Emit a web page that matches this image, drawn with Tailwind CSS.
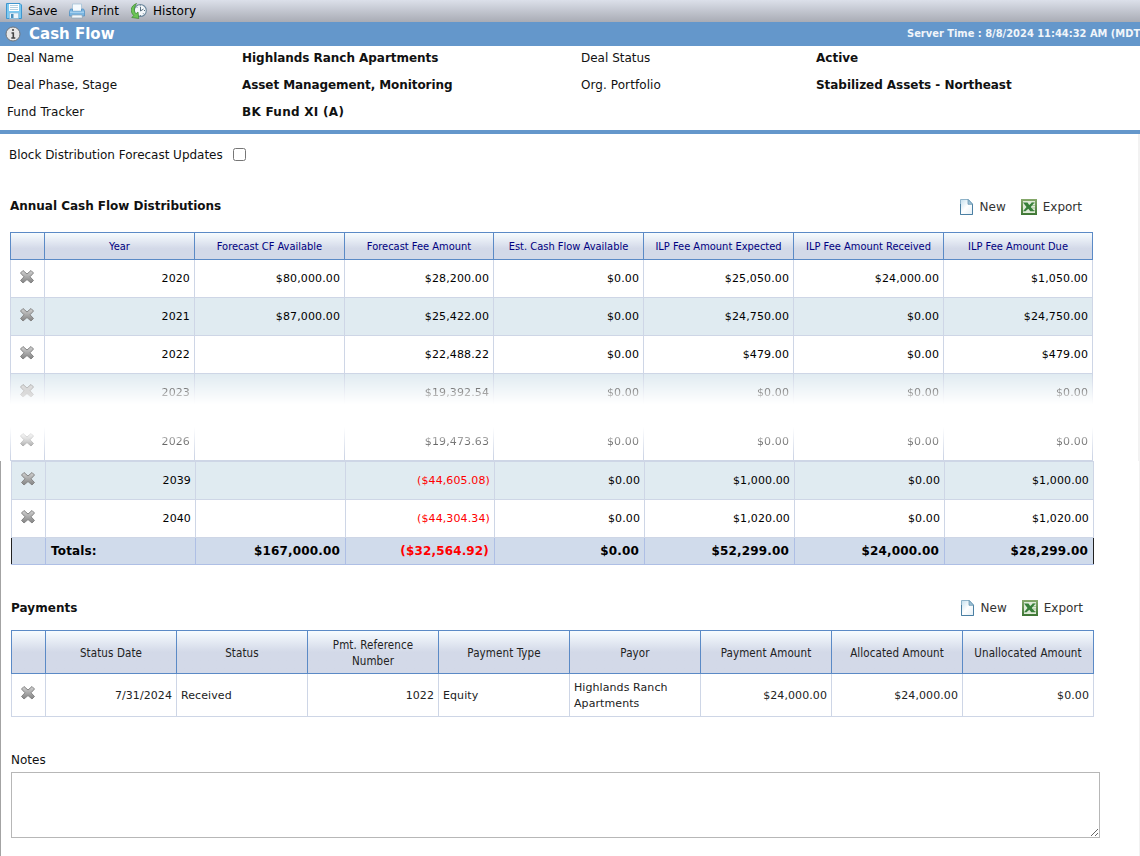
<!DOCTYPE html>
<html lang="en">
<head>
<meta charset="utf-8">
<title>Cash Flow</title>
<script src="https://cdn.jsdelivr.net/npm/@tailwindcss/browser@4"></script>
</head>
<body class="w-[1140px] h-[856px] overflow-hidden bg-white text-xs text-[#111] font-['Verdana','DejaVu_Sans',sans-serif]">
<svg class="absolute size-0">
  <defs>
    <linearGradient id="gx" x1="0" y1="0" x2="0" y2="1"><stop offset="0" stop-color="#d2d2d2"/><stop offset="1" stop-color="#828282"/></linearGradient>
    <linearGradient id="gp" x1="0" y1="0" x2="1" y2="1"><stop offset="0" stop-color="#c3dfee"/><stop offset=".5" stop-color="#fff"/><stop offset="1" stop-color="#e3eef5"/></linearGradient>
    <linearGradient id="ge" x1="0" y1="0" x2="0" y2="1"><stop offset="0" stop-color="#86a96c"/><stop offset="1" stop-color="#3d7634"/></linearGradient>
  </defs>
  <symbol id="x" viewBox="0 0 16 16"><path d="M4 1.500 8 5l4-3.500 2.500 2.500L11 7.800l3.500 3.700L12 14l-4-3.500L4 14l-2.500-2.500L5 7.800 1.500 4Z" fill="url(#gx)" stroke="#858585" stroke-linejoin="round"/></symbol>
  <symbol id="new" viewBox="0 0 14 16"><path d="M.5.500h8L12.500 4.800V15.500H.5Z" fill="url(#gp)" stroke="#8fb3c9"/><path d="M.5 15.500V5M.5 15.500H12.500V5" fill="none" stroke="#4a7fa3"/><path d="M8 .500V5.300H12.500Z" fill="#9cc2d8" stroke="#6a97b3" stroke-width=".8"/></symbol>
  <symbol id="xls" viewBox="0 0 16 16"><path d="M0 0h16v16H0Z" fill="url(#ge)"/><path d="M2 2h12v12H2Z" fill="#dfead8"/><path d="M10 4h4M11 6.500h3M11 9h3M10 11.500h4" stroke="#a5c497"/><path d="M2 3.500h4.500L8.200 6 11 3.500h2.500L9.800 8l3.700 4.300H9.300L7.300 9.800 4.500 12.300H2L5.500 8Z" fill="#38803a"/></symbol>
</svg>

<header>
  <div class="flex h-[22px] items-center bg-linear-to-b from-[#dce0ea] to-[#a9acb5] text-black">
    <svg class="ml-[6px] size-4" viewBox="0 0 16 16"><path d="M.5.500h13.500l1.500 1.500v13.500H.5Z" fill="#7cc8f0" stroke="#3f96cf"/><path d="M3 1h10v7H3Z" fill="#fff"/><path d="M4 2.500h8M4 4.500h8M4 6.500h8" stroke="#b4cfe0"/><path d="M3.500 10h9v5.500h-9Z" fill="#eef5fa" stroke="#8ebad7" stroke-width=".7"/><path d="M5 11h2.500v4H5Z" fill="#4a90bd"/></svg>
    <span class="ml-[6px] w-[35px]">Save</span>
    <svg class="ml-[6px] size-4" viewBox="0 0 16 16"><path d="M3.500 1h9v7h-9Z" fill="#f5fafd" stroke="#a5c3d8" stroke-width=".8"/><path d="M1.500 6h2v2.500h9V6h2l1 2V13H.5V8.500Z" fill="#7bb6e2" stroke="#4a8ec2" stroke-width=".7"/><path d="M1 8.500h14V10H1Z" fill="#a3cfee"/><path d="M3 12h10l.5 3h-11Z" fill="#f4f8fb" stroke="#8ba3b4" stroke-width=".7"/></svg>
    <span class="ml-[6px] w-[34px] tracking-[.1px]">Print</span>
    <svg class="ml-[6px] size-4" viewBox="0 0 16 16"><circle cx="9.300" cy="7.500" r="6" fill="#f4f8fb" stroke="#6b879d" stroke-width="1.100"/><path d="M9.500 4v4l3-2M9.300 2.300v1M9.300 12v1M14 7.500h-1M5.800 4.200l.6.600M12.800 11l-.6-.6" fill="none" stroke="#475f72" stroke-width=".9"/><path d="M5.500.500C-1 3-1 9 2.700 12.500L.8 14.500l7 1L7 9 5 10.700C2.500 8 3 4 5.500.500Z" fill="#6cc556" stroke="#39872c" stroke-width=".7"/></svg>
    <span class="ml-[6px] tracking-[.05px]">History</span>
  </div>
  <div class="flex h-6 items-center bg-[#6497cb] text-white font-bold">
    <svg class="ml-[5px] size-4 shrink-0" viewBox="0 0 16 16"><circle cx="8" cy="8" r="7" fill="#e6e6e6" stroke="#6f7479"/><path d="M8 3v2M6.500 7H8.300v5M6.300 12h4" fill="none" stroke="#444" stroke-width="1.600"/></svg>
    <h1 class="ml-2 pt-[2px] text-[15px]">Cash Flow</h1>
    <div class="ml-auto w-[233px] overflow-hidden whitespace-nowrap pt-px font-['DejaVu_Sans_Condensed','DejaVu_Sans',sans-serif] [font-stretch:condensed] text-[11px] text-[#f0f5fa]">Server Time : 8/8/2024 11:44:32 AM (MDT</div>
  </div>
  <div class="grid h-[88px] grid-cols-[235px_339px_235px_1fr] grid-rows-[27px_27px_27px] border-b-4 border-[#6497cb] pl-[7px] leading-[25px]">
    <span>Deal Name</span><b class="tracking-[-.04px]">Highlands Ranch Apartments</b><span>Deal Status</span><b>Active</b>
    <span class="tracking-[.05px]">Deal Phase, Stage</span><b class="tracking-[-.08px]">Asset Management, Monitoring</b><span class="tracking-[.08px]">Org. Portfolio</span><b class="tracking-[-.04px]">Stabilized Assets - Northeast</b>
    <span class="tracking-[.1px]">Fund Tracker</span><b class="tracking-[.28px]">BK Fund XI (A)</b>
  </div>
</header>

<main>
  <section class="h-[327px] border-r-2 border-[#f2f2f2] pl-[10px]">
    <div class="-ml-px flex h-[41px] items-center"><span class="tracking-[-.02px]">Block Distribution Forecast Updates</span><span class="ml-[10px] size-[13px] rounded-[2.500px] border border-[#767676] bg-white"></span></div>
    <div class="flex h-[57px] w-[1083px] items-center">
      <h2 class="mt-[4px] font-bold tracking-[-.02px]">Annual Cash Flow Distributions</h2>
      <div class="mr-[11px] ml-auto mt-[6px] flex items-center text-[#333]"><svg class="h-4 w-[14px]"><use href="#new"/></svg><span class="ml-[6px]">New</span><svg class="ml-[15px] size-4"><use href="#xls"/></svg><span class="ml-[6px]">Export</span></div>
    </div>
    <div id="annual"></div>
  </section>

  <section class="h-[395px] border-l border-l-[#a3a3a3] border-r border-r-[#f2f2f2] pl-[10px]">
    <div id="annualEnd"></div>
    <div class="flex h-[65px] w-[1083px] items-center">
      <h2 class="mt-[20px] font-bold tracking-[.05px]">Payments</h2>
      <div class="mr-[11px] ml-auto mt-[21px] flex items-center text-[#333]"><svg class="h-4 w-[14px]"><use href="#new"/></svg><span class="ml-[6px]">New</span><svg class="ml-[15px] size-4"><use href="#xls"/></svg><span class="ml-[6px]">Export</span></div>
    </div>
    <div id="payments"></div>
    <div class="mt-[35px] h-[20px]">Notes</div>
    <textarea class="block h-[66px] w-[1089px] resize border border-[#b7b7b7] bg-white"></textarea>
  </section>
</main>

<script>
const grid = 'grid w-[1083px] grid-cols-[34px_150px_150px_149px_150px_150px_150px_149px]';
const payGrid = 'grid w-[1083px] grid-cols-[34px_131px_131px_131px_131px_131px_131px_131px_131px]';
const icon = '<svg class="size-4"><use href="#x"/></svg>';
const head = (cols, names, size) => `<div class="${cols} ${size} border-y border-r border-[#5b8ac6] font-['DejaVu_Sans_Condensed','DejaVu_Sans',sans-serif] [font-stretch:condensed]">` +
  ['', ...names].map(n => `<div class="flex items-center justify-center border-l border-[#5b8ac6] px-4 pt-px text-center leading-4"><span class="-mx-4">${n}</span></div>`).join('') + '</div>';
const row = (vals, extra) => `<div class="${grid} h-[38px] border-b border-r border-[#ced6e6] text-[11px] tracking-[.12px] text-black ${extra}">` +
  `<div class="flex justify-center border-l border-[#ced6e6] pt-[9px] pr-px">${icon}</div>` +
  vals.map(v => `<div class="flex items-center justify-end border-l border-[#ced6e6] pt-[2px] pr-1 ${v[0] === '(' ? 'text-[#f00]' : ''}">${v}</div>`).join('') + '</div>';

annual.innerHTML =
  head(grid, ['Year','Forecast CF Available','Forecast Fee Amount','Est. Cash Flow Available','ILP Fee Amount Expected','ILP Fee Amount Received','ILP Fee Amount Due'],
    'h-[28px] bg-linear-to-b from-[#f7fcff] to-[#d3d9e8] to-60% text-[11px] text-[#000080]') +
  row(['2020','$80,000.00','$28,200.00','$0.00','$25,050.00','$24,000.00','$1,050.00'], '') +
  row(['2021','$87,000.00','$25,422.00','$0.00','$24,750.00','$0.00','$24,750.00'], 'bg-[#e0ebf1]') +
  row(['2022','','$22,488.22','$0.00','$479.00','$0.00','$479.00'], '') +
  row(['2023','','$19,392.54','$0.00','$0.00','$0.00','$0.00'], 'bg-[#e0ebf1] [mask-image:linear-gradient(to_bottom,black_0%,transparent_80%)]') +
  '<div class="h-[11px]"></div>' +
  row(['2026','','$19,473.63','$0.00','$0.00','$0.00','$0.00'], '[mask-image:linear-gradient(to_bottom,transparent_10%,black_88%)]');

annualEnd.innerHTML = '<div class="h-px w-[1083px] bg-[#ced6e6]"></div>' +
  row(['2039','','($44,605.08)','$0.00','$1,000.00','$0.00','$1,000.00'], 'bg-[#e0ebf1]') +
  row(['2040','','($44,304.34)','$0.00','$1,020.00','$0.00','$1,020.00'], '') +
  `<div class="${grid} h-[27px] border-b border-[#aebfe5] bg-[#d0dbeb] font-bold tracking-[.15px] text-black"><div class="border-l border-[#222]"></div>` +
  `<div class="flex items-center border-l border-[#aebfe5] pl-[5px]">Totals:</div>` +
  ['$167,000.00','($32,564.92)','$0.00','$52,299.00','$24,000.00'].map(v => `<div class="flex items-center justify-end border-l border-[#aebfe5] pr-[5px] ${v[0] === '(' ? 'text-[#f00]' : ''}">${v}</div>`).join('') +
  `<div class="-mr-px flex items-center justify-end border-l border-r border-l-[#aebfe5] border-r-[#222] pr-[5px]">$28,299.00</div></div>`;

payments.innerHTML =
  head(payGrid, ['Status Date','Status','Pmt. Reference<br>Number','Payment Type','Payor','Payment Amount','Allocated Amount','Unallocated Amount'],
    'h-[44px] bg-linear-to-b from-[#f7fcff] to-[#d3d9e8] to-50% text-[11.5px] tracking-[.1px] text-[#222]') +
  `<div class="${payGrid} h-[43px] border-b border-r border-[#ced6e6] text-[11px] tracking-[.08px] text-[#222]"><div class="flex justify-center border-l border-[#ced6e6] pt-[11px] pr-px">${icon}</div>` +
  [['7/31/2024',1],['Received',0],['1022',1],['Equity',0],['Highlands Ranch<br>Apartments',0],['$24,000.00',1],['$24,000.00',1],['$0.00',1]]
    .map(([v, right]) => `<div class="flex items-center border-l border-[#ced6e6] px-1 pt-[2px] leading-4 ${right ? 'justify-end' : ''}">${v}</div>`).join('') + '</div>';
</script>
</body>
</html>
